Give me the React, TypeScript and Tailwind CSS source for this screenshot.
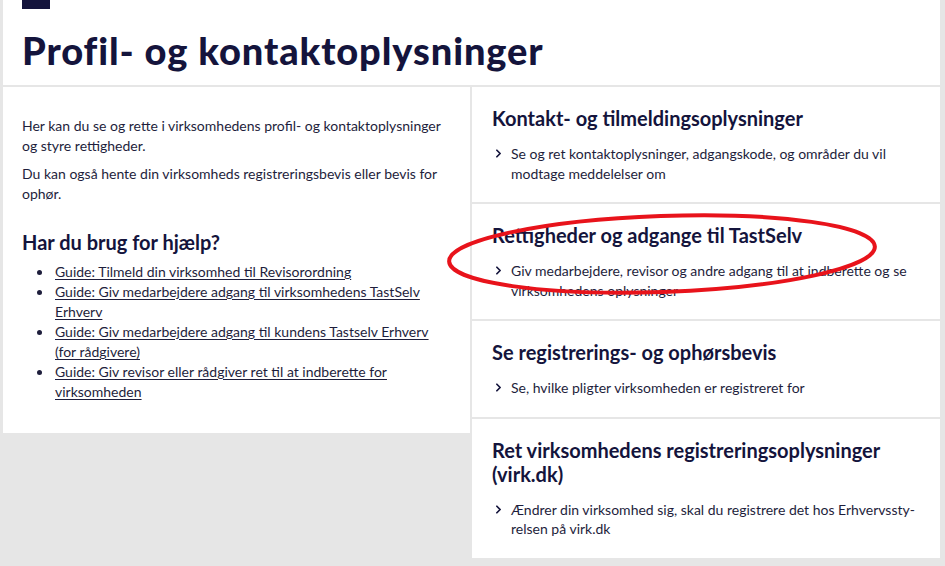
import { ChevronRight } from "lucide-react";

const guides = [
  "Guide: Tilmeld din virksomhed til Revisorordning",
  "Guide: Giv medarbejdere adgang til virksomhedens TastSelv Erhverv",
  "Guide: Giv medarbejdere adgang til kundens Tastselv Erhverv (for rådgivere)",
  "Guide: Giv revisor eller rådgiver ret til at indberette for virksomheden",
];

const cards = [
  {
    title: "Kontakt- og tilmeldingsoplysninger",
    text: "Se og ret kontaktoplysninger, adgangskode, og områder du vil modtage meddelelser om",
  },
  {
    title: "Rettigheder og adgange til TastSelv",
    text: "Giv medarbejdere, revisor og andre adgang til at indberette og se virksomhedens oplysninger",
  },
  {
    title: "Se registrerings- og ophørsbevis",
    text: "Se, hvilke pligter virksomheden er registreret for",
  },
  {
    title: "Ret virksomhedens registreringsoplysninger (virk.dk)",
    text: "Ændrer din virksomhed sig, skal du registrere det hos Erhvervssty\u00ADrelsen på virk.dk",
  },
];

export default function App() {
  return (
    <div className="relative h-[566px] w-full overflow-hidden bg-[#e6e6e6] pl-[3px] pr-[5px] font-['Lato',sans-serif] text-[#1e1e3c]">
      <header className="h-[85px] bg-white px-[19px]">
        <div className="h-[9px] w-[28px] bg-[#14143c]" />
        <h1 className="mt-[22px] text-[38px] font-black leading-none tracking-[0.9px] text-[#14143c]">
          Profil- og kontaktoplysninger
        </h1>
      </header>

      <div className="mt-[2px] grid grid-cols-[467px_1fr] items-start gap-[2px]">
        <section className="bg-white px-[19px] pb-[31px] pt-[29px] text-[14px] leading-[20px]">
          <p>Her kan du se og rette i virksomhedens profil- og kontaktoplysninger og styre rettigheder.</p>
          <p className="mt-2">Du kan også hente din virksomheds registreringsbevis eller bevis for ophør.</p>
          <h2 className="mt-6 text-[20px] font-bold leading-[28px] text-[#14143c]">Har du brug for hjælp?</h2>
          <ul className="mt-[6px] list-disc pl-[31px]">
            {guides.map((g) => (
              <li key={g} className="pl-[2px]">
                <a href="#" className="underline underline-offset-2">
                  {g}
                </a>
              </li>
            ))}
          </ul>
        </section>

        <div className="flex flex-col gap-[2px]">
          {cards.map((c) => (
            <section key={c.title} className="bg-white px-5 pb-[19px] pt-[19px]">
              <h2 className="pr-6 text-[20px] font-bold leading-[24px] text-[#14143c]">{c.title}</h2>
              <div className="mt-[14px] flex gap-[6px] text-[14px] leading-[19.5px]">
                <ChevronRight size={13} strokeWidth={3.2} className="mt-[3px] shrink-0 text-[#14143c]" />
                <p className="hyphens-manual">{c.text}</p>
              </div>
            </section>
          ))}
        </div>
      </div>

      <svg
        className="pointer-events-none absolute left-[444px] top-[206px]"
        width="440"
        height="94"
        viewBox="0 0 440 94"
      >
        <ellipse
          cx="218"
          cy="48"
          rx="213"
          ry="38"
          transform="rotate(-2 218 48)"
          fill="none"
          stroke="#e8131b"
          strokeWidth="4"
        />
      </svg>
    </div>
  );
}
